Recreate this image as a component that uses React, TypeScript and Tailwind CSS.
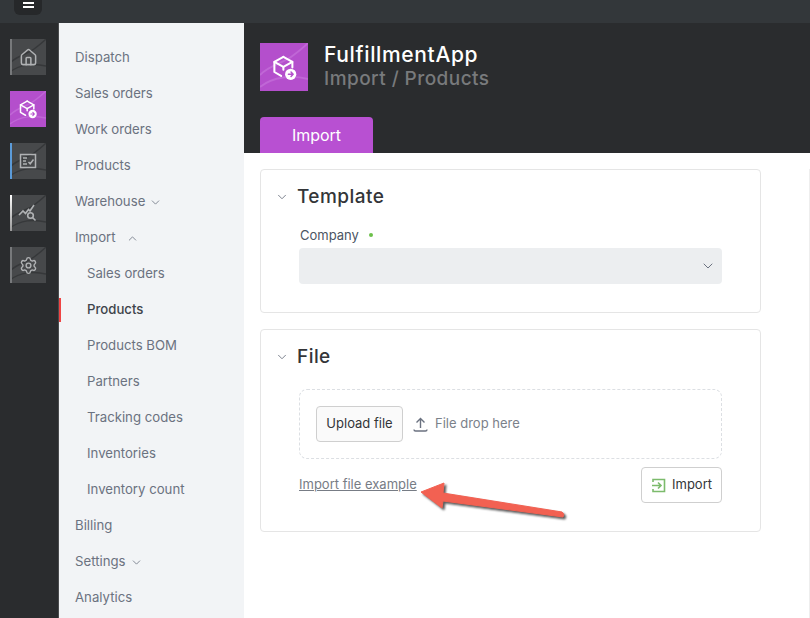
import { ChevronDown, ChevronUp, Home, Settings } from "lucide-react";

const MENU_TOP = ["Dispatch", "Sales orders", "Work orders", "Products"];
const IMPORT_ITEMS = ["Sales orders", "Products", "Products BOM", "Partners", "Tracking codes", "Inventories", "Inventory count"];

function Waves({ color }: { color: string }) {
  return (
    <svg className="absolute inset-0 h-full w-full" viewBox="0 0 36 36" fill="none">
      <path d="M0 24 C8 16 16 16 24 10 C28 7 32 4 36 0" stroke={color} strokeWidth="1.4" />
      <path d="M0 33 C10 25 24 24 36 27" stroke={color} strokeWidth="1.4" />
    </svg>
  );
}

function BoxIcon({ size }: { size: number }) {
  return (
    <svg width={size} height={size} viewBox="0 0 24 24" fill="none" stroke="white" strokeWidth="1.8" strokeLinejoin="round" strokeLinecap="round">
      <path d="M11 2.5 L19 7 V12" />
      <path d="M11 2.5 L3 7 V16 L9 19.5" />
      <path d="M3 7 L11 11.5 L19 7" />
      <path d="M11 11.5 V14" />
      <circle cx="17.5" cy="18" r="5" fill="white" stroke="none" />
      <path d="M15.5 18 H19.5 M17.8 16 L19.7 18 L17.8 20" stroke="#b44fcc" strokeWidth="1.3" />
    </svg>
  );
}

function RailTile({ edge, children }: { edge: string; children: React.ReactNode }) {
  return (
    <div className="relative flex h-9 w-9 items-center justify-center bg-[#47494b]">
      <Waves color="#36383a" />
      <div className={`absolute left-0 top-0 h-full w-0.5 ${edge}`} />
      <div className="relative text-[#b0b2b4]">{children}</div>
    </div>
  );
}

function Rail() {
  return (
    <div className="flex w-[59px] shrink-0 flex-col gap-4 border-r border-[#4a4c4e] bg-[#2a2c2e] pl-2.5 pt-4">
      <RailTile edge="bg-[#77797b]">
        <Home size={19} strokeWidth={1.9} />
      </RailTile>
      <div className="relative flex h-9 w-9 items-center justify-center bg-[#b44fcc]">
        <Waves color="#c067d6" />
        <div className="relative">
          <BoxIcon size={20} />
        </div>
      </div>
      <RailTile edge="bg-[#5b9bd9]">
        <svg width="18" height="18" viewBox="0 0 18 18" fill="none" stroke="currentColor" strokeWidth="1.5">
          <rect x="1.5" y="2.5" width="15" height="13" />
          <path d="M4 6 H8 M4 9 H7 M4 12 H8 M9.5 10 L11.2 11.8 L14.5 7.5" />
        </svg>
      </RailTile>
      <RailTile edge="bg-gradient-to-b from-white to-[#999999]">
        <svg width="20" height="18" viewBox="0 0 20 18" fill="none" stroke="currentColor" strokeWidth="1.6">
          <path d="M1 11 L5 7 L7.5 9.5 L10.5 5.5 L12 7 L16 1" />
          <circle cx="12.5" cy="11.5" r="2.8" />
          <path d="M14.5 13.5 L17.5 16.5" />
        </svg>
      </RailTile>
      <RailTile edge="bg-[#77797b]">
        <Settings size={19} strokeWidth={1.8} />
      </RailTile>
    </div>
  );
}

function MenuRow({ label, sub, active, icon }: { label: string; sub?: boolean; active?: boolean; icon?: React.ReactNode }) {
  return (
    <div className={`relative flex h-9 items-center text-[13.2px] ${sub ? "pl-7" : "pl-4"} ${active ? "font-medium text-[#3f444b]" : "text-[#6b7280]"}`}>
      {active && <div className="absolute left-0 top-1.5 h-6 w-0.5 bg-[#ef4444]" />}
      {label}
      {icon}
    </div>
  );
}

function Sidebar() {
  return (
    <div className="h-full w-[185px] shrink-0 bg-[#f2f4f6] pt-[17px]">
      {MENU_TOP.map((m) => (
        <MenuRow key={m} label={m} />
      ))}
      <MenuRow label="Warehouse" icon={<ChevronDown size={13} strokeWidth={1.5} className="ml-1" />} />
      <MenuRow label="Import" icon={<ChevronUp size={13} strokeWidth={1.5} className="ml-2.5" />} />
      {IMPORT_ITEMS.map((m) => (
        <MenuRow key={m} label={m} sub active={m === "Products"} />
      ))}
      <MenuRow label="Billing" />
      <MenuRow label="Settings" icon={<ChevronDown size={13} strokeWidth={1.5} className="ml-1" />} />
      <MenuRow label="Analytics" />
    </div>
  );
}

function Header() {
  return (
    <div className="h-[130px] shrink-0 bg-[#2a2c2e] pl-4">
      <div className="flex items-center gap-4 pt-5">
        <div className="relative flex h-12 w-12 items-center justify-center bg-[#b44fcc]">
          <Waves color="#c067d6" />
          <div className="relative">
            <BoxIcon size={27} />
          </div>
        </div>
        <div className="leading-6">
          <div className="text-[21px] font-medium tracking-[0.65px] text-white">FulfillmentApp</div>
          <div className="text-[19px] font-medium tracking-[0.45px] text-[#787a7c]">Import / Products</div>
        </div>
      </div>
      <div className="mt-[26px] flex h-9 w-[113px] items-center justify-center rounded-t bg-[#b850d2] text-base text-white">
        Import
      </div>
    </div>
  );
}

function CardTitle({ title }: { title: string }) {
  return (
    <div className="flex h-[54px] items-center">
      <ChevronDown size={14} strokeWidth={1.5} className="ml-[14px] text-[#6b7280]" />
      <span className="ml-2 text-[19px] font-medium tracking-[0.45px] text-[#333538]">{title}</span>
    </div>
  );
}

function Content() {
  return (
    <div className="flex min-h-0 flex-1 bg-white">
      <div className="flex w-[533px] shrink-0 flex-col gap-4 p-4">
        <div className="h-[144px] rounded border border-[#e5e5e5]">
          <CardTitle title="Template" />
          <div className="px-[38px]">
            <div className="-mt-px flex items-center gap-[10px] pl-px text-[13px] leading-6 text-[#4b5563]">
              Company
              <span className="h-1 w-1 rounded-full bg-[#6cc04a]" />
            </div>
            <div className="mt-px flex h-9 items-center justify-end rounded bg-[#eceef0] pr-[6px]">
              <ChevronDown size={16} strokeWidth={1.5} className="text-[#6b7280]" />
            </div>
          </div>
        </div>
        <div className="h-[203px] rounded border border-[#e5e5e5]">
          <CardTitle title="File" />
          <div className="px-[38px] pt-[5px]">
            <div className="flex h-[70px] items-center rounded-lg border border-dashed border-[#dcdfe3] pl-4">
              <div className="flex h-9 w-[87px] items-center justify-center rounded border border-[#cfcfcf] bg-[#fafafa] text-[13px] text-[#333538]">
                Upload file
              </div>
              <svg className="ml-2.5" width="15" height="15" viewBox="0 0 15 15" fill="none" stroke="#6b7280" strokeWidth="1.4">
                <path d="M7.5 11 V2 M3.5 5.5 L7.5 1.5 L11.5 5.5" />
                <path d="M1 12.5 Q1 14 2.5 14 H12.5 Q14 14 14 12.5" />
              </svg>
              <span className="ml-[7px] text-[13px] text-[#7b818a]">File drop here</span>
            </div>
            <div className="mt-2 flex items-start justify-between">
              <a className="mt-[7px] text-[13px] leading-5 text-[#777c85] underline">Import file example</a>
              <div className="flex h-9 w-[81px] items-center justify-center gap-1.5 rounded border border-[#cfcfcf] text-[13px] text-[#333538]">
                <svg width="15" height="15" viewBox="0 0 15 15" fill="none" stroke="#7cbb6c" strokeWidth="1.6">
                  <path d="M2 4 V1.5 H13.5 V13.5 H2 V11" />
                  <path d="M1 7.5 H10 M7 4.5 L10 7.5 L7 10.5" />
                </svg>
                Import
              </div>
            </div>
          </div>
        </div>
      </div>
      <div className="ml-[32px] mt-4 h-[500px] w-px bg-[#eeeeee]" />
    </div>
  );
}

export default function App() {
  return (
    <div className="relative flex h-[618px] w-[810px] flex-col overflow-hidden bg-white font-['Inter',sans-serif]">
      <div className="h-[23px] shrink-0 bg-[#33373a] pl-3.5">
        <div className="flex h-[15px] w-7 flex-col items-center gap-[2px] rounded-b-md bg-[#26282a] pt-0.5">
          <div className="h-0.5 w-[11px] bg-white" />
          <div className="h-0.5 w-[11px] bg-white" />
        </div>
      </div>
      <div className="flex min-h-0 flex-1">
        <Rail />
        <Sidebar />
        <div className="flex min-w-0 flex-1 flex-col">
          <Header />
          <Content />
        </div>
      </div>
      <svg className="absolute left-[415px] top-[480px] drop-shadow-[2px_2px_1px_rgba(0,0,0,0.65)]" width="160" height="48" viewBox="0 0 160 48" fill="none">
        <path d="M6 12 L29 3 L28 13 L147 32 Q150 34 148 37 L28 21 L27 28 Z" fill="#f26152" stroke="#f26152" strokeLinejoin="round" />
      </svg>
    </div>
  );
}
